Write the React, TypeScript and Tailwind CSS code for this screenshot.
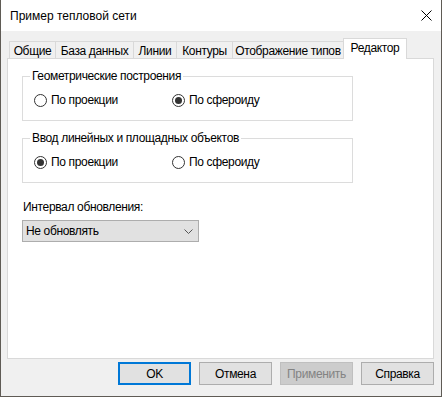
import React from "react";

const font = { fontFamily: '"Liberation Sans", Arial, sans-serif' };

function Radio({ checked, label, w }: { checked?: boolean; label: string; w?: string }) {
  return (
    <div className={`flex items-center gap-[4px] ${w ?? ""}`}>
      <div className="w-[13px] h-[13px] rounded-full border border-[#333333] bg-white flex items-center justify-center">
        {checked && <div className="w-[7px] h-[7px] rounded-full bg-[#333333]" />}
      </div>
      <span className="text-[12px] leading-[15px] text-black">{label}</span>
    </div>
  );
}

function Group({ title, first, className }: { title: string; first: boolean; className?: string }) {
  return (
    <div className={`relative w-[331px] h-[45px] border border-[#dcdcdc] ${className ?? ""}`}>
      <span className="absolute left-[7px] -top-[8px] bg-white px-[2px] text-[12px] leading-[15px] text-black whitespace-nowrap">
        {title}
      </span>
      <div className="flex pl-[11px] pt-[16px]">
        <Radio checked={first} label="По проекции" w="w-[138px]" />
        <Radio checked={!first} label="По сфероиду" />
      </div>
    </div>
  );
}

const tabs = [
  { label: "Общие", w: "w-[46px]" },
  { label: "База данных", w: "w-[78px]" },
  { label: "Линии", w: "w-[43px]" },
  { label: "Контуры", w: "w-[56px]" },
  { label: "Отображение типов", w: "w-[111px]" },
];

function Button({ label, variant }: { label: string; variant?: "default" | "disabled" }) {
  const cls =
    variant === "default"
      ? "border-2 border-[#0078d7] bg-[#e1e1e1] text-black"
      : variant === "disabled"
      ? "border border-[#bfbfbf] bg-[#cccccc] text-[#838383]"
      : "border border-[#adadad] bg-[#e1e1e1] text-black";
  return (
    <div className={`w-[73px] h-[23px] flex items-center justify-center text-[12px] ${cls}`}>{label}</div>
  );
}

export default function App() {
  return (
    <div
      className="w-[442px] h-[397px] flex flex-col border-x border-b border-[#5f5b55] bg-[#f0f0f0] text-black"
      style={font}
    >
      <div className="h-[31px] shrink-0 bg-white flex items-center justify-between pl-[9px] pr-[9px]">
        <span className="text-[12px]">Пример тепловой сети</span>
        <svg width="11" height="11" viewBox="0 0 11 11" className="mt-[-1px]">
          <path d="M0.5 0.5 L10.5 10.5 M10.5 0.5 L0.5 10.5" stroke="#000" strokeWidth="1" />
        </svg>
      </div>
      <div className="flex-1 pl-[6px] pt-[7px] tracking-[-0.35px]">
        <div className="flex items-end h-[20px] pl-[2px]">
          {tabs.map((t) => (
            <div
              key={t.label}
              className={`${t.w} h-[17px] border-l border-t border-[#d9d9d9] bg-[#f0f0f0] flex items-center justify-center pt-[1px] text-[12px] whitespace-nowrap`}
            >
              {t.label}
            </div>
          ))}
          <div className="relative z-10 w-[64px] h-[21px] -mb-px border-l border-t border-r border-[#d9d9d9] bg-white flex items-center justify-center pb-[2px] text-[12px]">
            Редактор
          </div>
        </div>
        <div className="w-[427px] h-[301px] bg-white border border-[#d9d9d9] pl-[14px] pt-[17px]">
          <Group title="Геометрические построения" first={false} />
          <Group title="Ввод линейных и площадных объектов" first={true} className="mt-[17px]" />
          <div className="mt-[17px] text-[12px] leading-[15px] pl-[1px]">Интервал обновления:</div>
          <div className="mt-[5px] w-[177px] h-[22px] bg-[#e1e1e1] border border-[#adadad] flex items-center justify-between pl-[3px] pr-[5px] text-[12px]">
            <span>Не обновлять</span>
            <svg width="9" height="5" viewBox="0 0 9 5">
              <path d="M0.5 0.5 L4.5 4.5 L8.5 0.5" fill="none" stroke="#555" strokeWidth="1" />
            </svg>
          </div>
        </div>
        <div className="w-[427px] flex justify-end gap-[8px] mt-[3px]">
          <Button label="OK" variant="default" />
          <Button label="Отмена" />
          <Button label="Применить" variant="disabled" />
          <Button label="Справка" />
        </div>
      </div>
    </div>
  );
}
